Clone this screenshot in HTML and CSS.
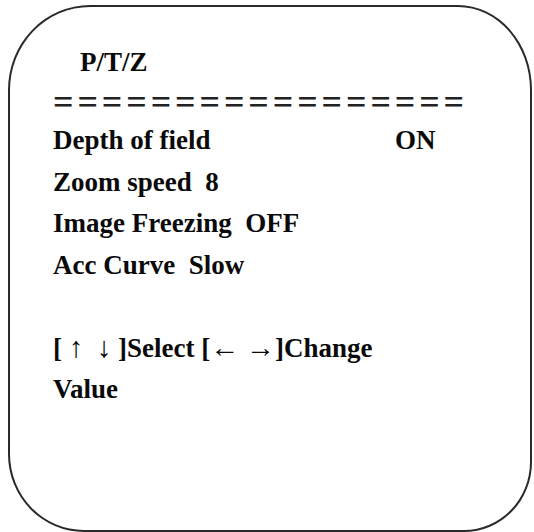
FILE: index.html
```html
<!DOCTYPE html>
<html>
<head>
<meta charset="utf-8">
<link rel="stylesheet" href="styles.css">
</head>
<body>
<div class="panel">
  <div class="title">P/T/Z</div>
  <div class="rule">=================</div>
  <div class="row split"><span class="label">Depth of field</span><span class="value">ON</span></div>
  <div class="row">Zoom speed  8</div>
  <div class="row">Image Freezing  OFF</div>
  <div class="row">Acc Curve  Slow</div>
  <div class="row blank"></div>
  <div class="row">[ <span class="arrow">↑</span>  <span class="arrow">↓</span> ]Select [<span class="arrow">←</span> <span class="arrow">→</span>]Change</div>
  <div class="row">Value</div>
</div>
</body>
</html>
```
FILE: styles.css
```css
html, body {
  margin: 0;
  padding: 0;
  background: #ffffff;
}
body {
  width: 534px;
  height: 532px;
  overflow: hidden;
  font-family: "Liberation Serif", "Times New Roman", serif;
  font-weight: bold;
  color: #0a0a0a;
}
.panel {
  box-sizing: border-box;
  margin: 5px 0 0 8px;
  width: 524px;
  height: 527px;
  border: 2px solid #2a2a2a;
  border-radius: 82px 74px 68px 76px / 85px 85px 70px 78px;
  padding: 35px 0 0 43px;
}
.title {
  font-size: 27px;
  line-height: 41.5px;
  padding-left: 27px;
}
.rule {
  font-size: 36px;
  line-height: 36.5px;
  letter-spacing: 3.9px;
  font-weight: bold;
  white-space: pre;
  color: #222;
}
.row {
  font-size: 27px;
  line-height: 41.5px;
  height: 41.5px;
  white-space: pre;
}
.split {
  display: flex;
}
.label {
  width: 342px;
}
.arrow {
  font-size: 29px;
  font-weight: normal;
  line-height: 30px;
}
```
